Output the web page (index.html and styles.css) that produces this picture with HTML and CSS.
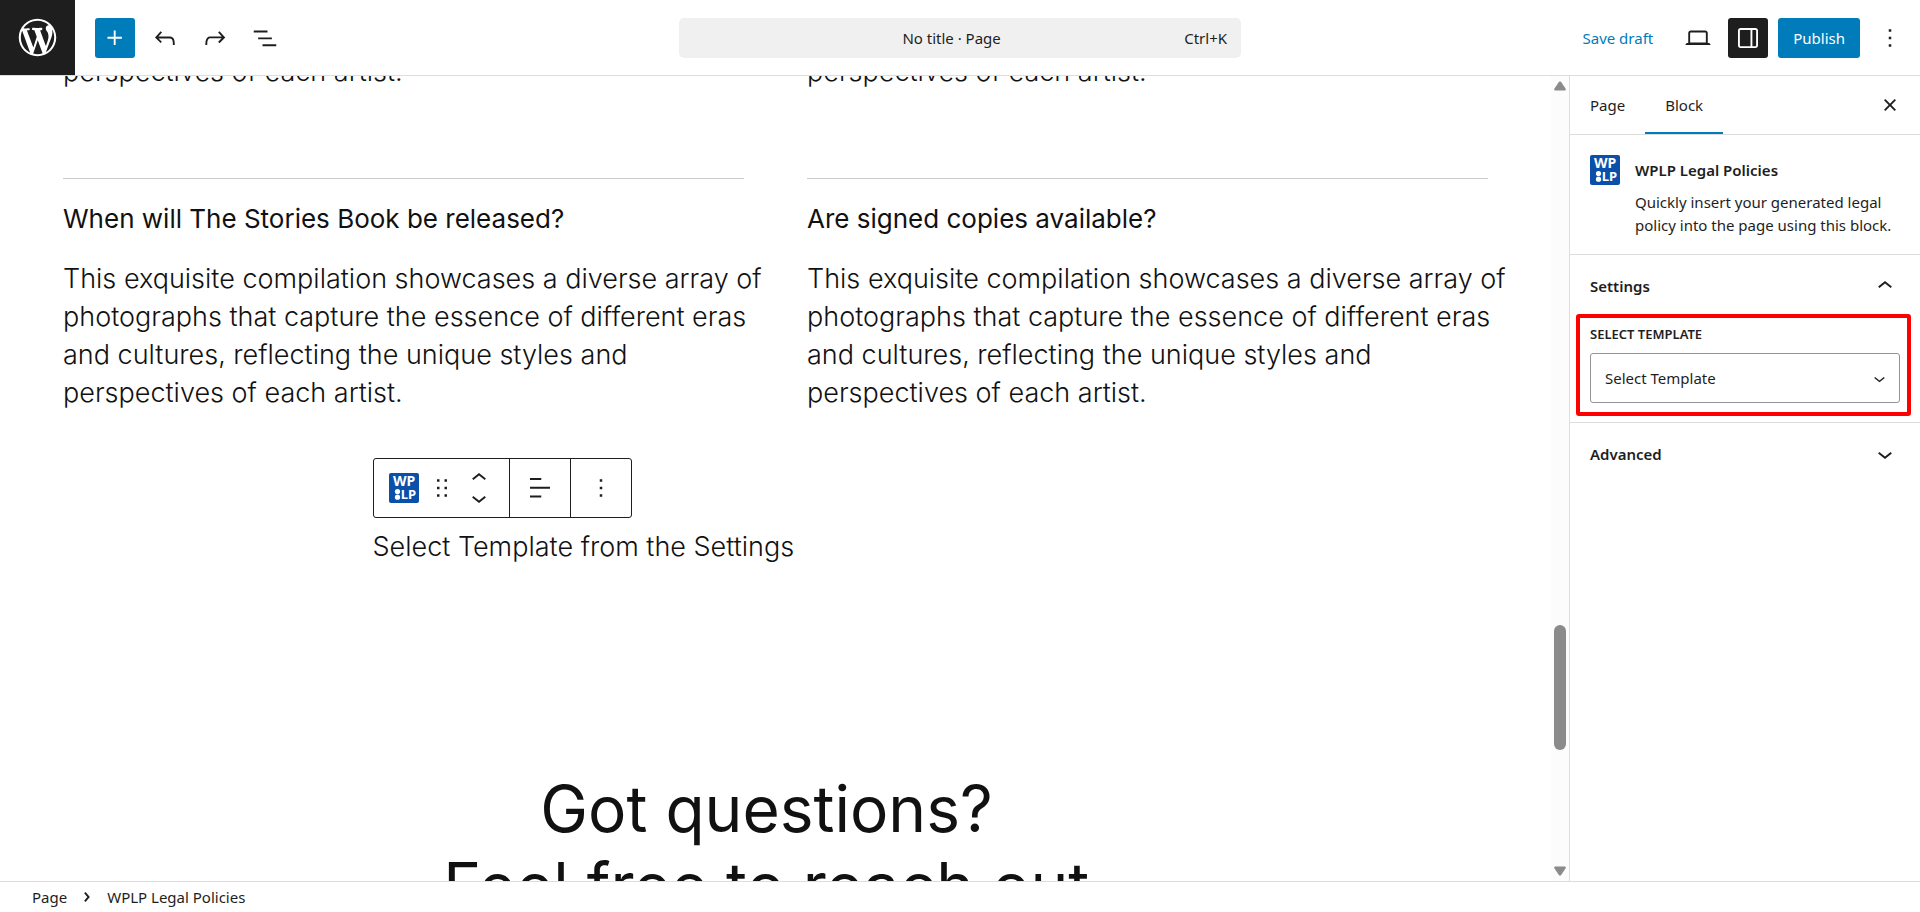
FILE: index.html
```html
<!DOCTYPE html>
<html lang="en">
<head>
  <meta charset="UTF-8">
  <meta name="viewport" content="width=device-width, initial-scale=1.0">
  <title>No title - Page editor</title>
  <link rel="stylesheet" href="styles.css">
</head>
<body>
  <!-- Shared WPLP logo -->
  <svg class="symbols" aria-hidden="true">
    <symbol id="wplp" viewBox="0 0 30 30">
      <rect width="30" height="30" rx="2" fill="#0b50a8"/>
      <g fill="#fff" font-family="'Noto Sans', sans-serif" font-weight="700" font-size="13">
        <text x="15" y="13" font-size="14" text-anchor="middle">WP</text>
        <text x="27" y="26" text-anchor="end">LP</text>
      </g>
      <circle cx="8.500" cy="18.500" r="2.600" fill="#fff"/>
      <circle cx="8.500" cy="24.200" r="2.600" fill="#fff"/>
    </symbol>
  </svg>

  <div class="editor">
    <header class="header">
      <div class="header-left">
        <a href="#" class="wp-logo" aria-label="View pages">
          <svg viewBox="-2 -2 24 24"><path d="M20 10c0-5.51-4.49-10-10-10C4.48 0 0 4.49 0 10c0 5.52 4.48 10 10 10 5.51 0 10-4.48 10-10zM7.78 15.37L4.37 6.22c.55-.02 1.17-.08 1.17-.08.5-.06.44-1.13-.06-1.11 0 0-1.45.11-2.37.11-.18 0-.37 0-.58-.01C4.12 2.69 6.87 1.11 10 1.11c2.33 0 4.45.87 6.05 2.34-.68-.11-1.65.39-1.65 1.58 0 .74.45 1.36.9 2.1.35.61.55 1.36.55 2.46 0 1.49-1.4 5-1.4 5l-3.03-8.37c.54-.02.82-.17.82-.17.5-.05.44-1.25-.06-1.22 0 0-1.44.12-2.38.12-.87 0-2.33-.12-2.33-.12-.5-.03-.56 1.2-.06 1.22l.92.08 1.26 3.41zM17.41 10c.24-.64.74-1.87.43-4.25.7 1.29 1.05 2.71 1.05 4.25 0 3.29-1.73 6.24-4.4 7.78.97-2.59 1.94-5.2 2.92-7.78zM6.1 18.09C3.12 16.65 1.11 13.53 1.11 10c0-1.3.23-2.48.72-3.59C3.25 10.3 4.67 14.2 6.1 18.09zm4.03-6.63l2.58 6.98c-.86.29-1.76.45-2.71.45-.79 0-1.57-.11-2.29-.33.81-2.38 1.62-4.74 2.42-7.1z"/></svg>
        </a>
        <div class="tools">
          <button class="icon-btn primary" aria-label="Block inserter"><svg class="icon" viewBox="0 0 24 24"><path d="M11 12.5V17.5H12.5V12.5H17.5V11H12.5V6H11V11H6V12.5H11Z"/></svg></button>
          <button class="icon-btn" aria-label="Undo"><svg class="icon" viewBox="0 0 24 24"><path d="M18.3 11.7c-.6-.6-1.4-.9-2.3-.9H6.7l2.9-3.3-1.1-1-4.5 5L8.500 16l1-1-2.7-2.7H16c.5 0 .9.2 1.3.5 1 1 1 3.4 1 4.5v.3h1.5v-.2c0-1.5 0-4.3-1.5-5.7z"/></svg></button>
          <button class="icon-btn" aria-label="Redo"><svg class="icon" viewBox="0 0 24 24"><path d="M15.6 6.5l-1.1 1 2.9 3.3H8c-.9 0-1.7.3-2.3.9-1.4 1.5-1.4 4.2-1.4 5.6v.2h1.5v-.3c0-1.1 0-3.5 1-4.5.3-.3.7-.5 1.3-.5h9.2L14.5 15l1.1 1.1 4.6-4.6-4.6-5z"/></svg></button>
          <button class="icon-btn" aria-label="Document overview"><svg class="icon" viewBox="0 0 24 24"><path d="M3 6h11v1.5H3V6Zm3.5 5.5h11V13h-11v-1.500ZM21 17H10v1.5h11V17Z"/></svg></button>
        </div>
      </div>

      <button class="command-bar">
        <span class="command-title">No title · Page</span>
        <span>Ctrl+K</span>
      </button>

      <div class="header-right">
        <button class="save-draft">Save draft</button>
        <button class="icon-btn" aria-label="View"><svg class="icon" viewBox="0 0 24 24"><path d="M20.5 16h-.7V8c0-1.1-.9-2-2-2H6.2c-1.1 0-2 .9-2 2v8h-.7c-.8 0-1.5.7-1.5 1.5h20c0-.8-.7-1.5-1.5-1.5zM5.7 8c0-.3.2-.5.5-.5h11.6c.3 0 .5.2.5.5v7.6H5.7V8z"/></svg></button>
        <button class="icon-btn pressed" aria-label="Settings"><svg class="icon" viewBox="0 0 24 24"><path d="M18 4H6c-1.1 0-2 .9-2 2v12c0 1.1.9 2 2 2h12c1.1 0 2-.9 2-2V6c0-1.1-.9-2-2-2zm-4 14.5H6c-.3 0-.5-.2-.5-.5V6c0-.3.2-.5.5-.5h8v13zm4.5-.5c0 .3-.2.5-.5.5h-2.5v-13H18c.3 0 .5.2.5.5v12z"/></svg></button>
        <button class="publish">Publish</button>
        <button class="icon-btn" aria-label="Options"><svg class="icon" viewBox="0 0 24 24"><path d="M13 19h-2v-2h2v2zm0-6h-2v-2h2v2zm0-6h-2V5h2v2z"/></svg></button>
      </div>
    </header>

    <div class="body">
      <main class="canvas">
        <div class="faq">
          <p class="faq-tail">perspectives of each artist.</p>
          <p class="faq-tail">perspectives of each artist.</p>
          <section class="faq-item">
            <h3>When will The Stories Book be released?</h3>
            <p>This exquisite compilation showcases a diverse array of<br>photographs that capture the essence of different eras<br>and cultures, reflecting the unique styles and<br>perspectives of each artist.</p>
          </section>
          <section class="faq-item">
            <h3>Are signed copies available?</h3>
            <p>This exquisite compilation showcases a diverse array of<br>photographs that capture the essence of different eras<br>and cultures, reflecting the unique styles and<br>perspectives of each artist.</p>
          </section>
        </div>

        <div class="block">
          <div class="block-toolbar">
            <div class="toolbar-group">
              <button class="tool block-type" aria-label="WPLP Legal Policies"><svg class="icon"><use href="#wplp"/></svg></button>
              <button class="tool drag" aria-label="Drag"><svg class="icon" viewBox="0 0 24 24"><path d="M8 7h2V5H8v2zm0 6h2v-2H8v2zm0 6h2v-2H8v2zm6-14v2h2V5h-2zm0 8h2v-2h-2v2zm0 6h2v-2h-2v2z"/></svg></button>
              <div class="movers">
                <button class="tool" aria-label="Move up"><svg class="icon" viewBox="0 0 24 24"><path d="M6.5 12.4L12 8l5.5 4.4-.9 1.2L12 10l-4.5 3.6-1-1.2z"/></svg></button>
                <button class="tool" aria-label="Move down"><svg class="icon" viewBox="0 0 24 24"><path d="M17.5 11.6L12 16l-5.5-4.4.9-1.2L12 14l4.5-3.6 1 1.2z"/></svg></button>
              </div>
            </div>
            <div class="toolbar-group">
              <button class="tool wide" aria-label="Align"><svg class="icon" viewBox="0 0 24 24"><path d="M13 5.5H4V4h9v1.500Zm7 7H4V11h16v1.500Zm-7 7H4V18h9v1.500Z"/></svg></button>
            </div>
            <div class="toolbar-group">
              <button class="tool wide" aria-label="Options"><svg class="icon" viewBox="0 0 24 24"><path d="M13 19h-2v-2h2v2zm0-6h-2v-2h2v2zm0-6h-2V5h2v2z"/></svg></button>
            </div>
          </div>
          <p>Select Template from the Settings</p>
        </div>

        <h2 class="contact-title">Got questions? <br>Feel free to reach out.</h2>
      </main>

      <div class="scrollbar">
        <svg viewBox="0 0 12 10"><path d="M5 .8Q6 0 7 .8L11.800 8Q12 9.500 11 9.500H1Q0 9.500 .2 8Z"/></svg>
        <div class="track"><div class="thumb"></div></div>
        <svg viewBox="0 0 12 10"><path d="M5 9.200Q6 10 7 9.200L11.800 2Q12 .5 11 .5H1Q0 .5 .2 2Z"/></svg>
      </div>

      <aside class="sidebar">
        <div class="tabs">
          <button class="tab">Page</button>
          <button class="tab active">Block</button>
          <button class="icon-btn close" aria-label="Close Settings"><svg class="icon" viewBox="0 0 24 24"><path d="M12 13.06l3.712 3.713 1.061-1.060L13.061 12l3.712-3.712-1.060-1.060L12 10.938 8.288 7.227l-1.061 1.060L10.939 12l-3.712 3.712 1.060 1.061L12 13.061z"/></svg></button>
        </div>

        <div class="block-card">
          <svg class="icon"><use href="#wplp"/></svg>
          <div>
            <h2>WPLP Legal Policies</h2>
            <p>Quickly insert your generated legal policy into the page using this block.</p>
          </div>
        </div>

        <div class="panel">
          <button class="panel-title">Settings <svg class="icon" viewBox="0 0 24 24"><path d="M6.5 12.4L12 8l5.5 4.4-.9 1.2L12 10l-4.5 3.6-1-1.2z"/></svg></button>
          <div class="field">
            <label for="template">Select Template</label>
            <div class="select-wrap">
              <select id="template">
                <option>Select Template</option>
              </select>
              <svg viewBox="0 0 24 24"><path d="M17.5 11.6L12 16l-5.500-4.4.9-1.2L12 14l4.5-3.6 1 1.2z"/></svg>
            </div>
          </div>
        </div>

        <div class="panel">
          <button class="panel-title">Advanced <svg class="icon" viewBox="0 0 24 24"><path d="M17.5 11.6L12 16l-5.5-4.4.9-1.2L12 14l4.5-3.6 1 1.2z"/></svg></button>
        </div>
      </aside>
    </div>

    <footer class="breadcrumb">
      <a href="#">Page</a>
      <svg viewBox="0 0 24 24"><path d="M10.862 8.040L14.280 12.029L10.862 16.017L9.723 15.040L12.305 12.029L9.723 9.017Z"/></svg>
      <span>WPLP Legal Policies</span>
    </footer>
  </div>
</body>
</html>
```
FILE: styles.css
```css
* {
  box-sizing: border-box;
}
body {
  margin: 0;
  font-family: "Noto Sans", "Open Sans", sans-serif;
  font-size: 15px;
  color: #1e1e1e;
  background: #fff;
}
h2, h3, p {
  margin: 0;
}
button {
  font: inherit;
  color: inherit;
  background: none;
  border: 0;
  padding: 0;
  cursor: pointer;
}
a {
  color: inherit;
  text-decoration: none;
}
svg {
  display: block;
  fill: currentColor;
  flex-shrink: 0;
}
.symbols {
  position: absolute;
  width: 0;
  height: 0;
}
.icon {
  width: 30px;
  height: 30px;
}
.editor {
  display: flex;
  flex-direction: column;
  height: 100vh;
}

/* Top bar */
.header {
  display: grid;
  grid-template-columns: 1fr minmax(0, 562px) 1fr;
  align-items: center;
  border-bottom: 1px solid #ddd;
}
.header-left, .tools, .header-right {
  display: flex;
  align-items: center;
}
.wp-logo {
  background: #1e1e1e;
  color: #fff;
  padding: 15px;
}
.wp-logo svg {
  width: 45px;
  height: 45px;
}
.tools {
  gap: 10px;
  padding-left: 20px;
}
.icon-btn {
  display: flex;
  align-items: center;
  justify-content: center;
  width: 40px;
  height: 40px;
  border-radius: 3px;
}
.primary, .publish {
  background: #007cba;
  color: #fff;
}
.pressed {
  background: #1e1e1e;
  color: #fff;
}
.command-bar {
  display: flex;
  align-items: center;
  height: 40px;
  padding: 0 14px 0 40px;
  background: #f0f0f0;
  border-radius: 5px;
}
.command-title {
  flex: 1;
}
.header-right {
  justify-content: flex-end;
  gap: 10px;
  padding-right: 10px;
}
.save-draft {
  height: 40px;
  padding: 0 15px;
  color: #007cba;
}
.publish {
  height: 40px;
  padding: 0 15px;
  border-radius: 3px;
}

/* Canvas */
.body {
  display: flex;
  flex: 1;
  min-height: 0;
}
.canvas {
  flex: 1;
  min-width: 0;
  overflow: hidden;
  padding: 0 63px;
  font-family: Inter, "Open Sans", sans-serif;
  font-size: 27px;
  font-weight: 300;
  line-height: 38px;
  color: #111;
}
.faq {
  display: grid;
  grid-template-columns: 1fr 1fr;
  column-gap: 63px;
  margin-top: -23px;
  white-space: nowrap;
}
.faq > * {
  min-width: 0;
}
.faq-tail {
  margin-bottom: 87px;
}
.faq-item {
  border-top: 1px solid #ccc;
  padding-top: 23px;
}
.faq-item h3 {
  font-size: 26px;
  font-weight: 400;
  line-height: 34px;
  margin-bottom: 24px;
}
.block {
  max-width: 806px;
  margin: 46px auto 0;
}
.block-toolbar {
  display: inline-flex;
  height: 60px;
  margin-bottom: 10px;
  border: 1px solid #1e1e1e;
  border-radius: 3px;
  background: #fff;
  color: #1e1e1e;
  vertical-align: top;
}
.toolbar-group {
  display: flex;
  align-items: center;
}
.toolbar-group + .toolbar-group {
  border-left: 1px solid #1e1e1e;
}
.tool {
  display: flex;
  align-items: center;
  justify-content: center;
}
.block-type {
  padding: 0 8px 0 15px;
}
.movers {
  padding: 0 15px 0 7px;
}
.movers .tool {
  height: 20px;
}
.wide {
  width: 60px;
}
.contact-title {
  margin-top: 204px;
  font-size: 64px;
  font-weight: 400;
  line-height: 77px;
  text-align: center;
  white-space: pre-wrap;
}

.scrollbar {
  display: flex;
  flex-direction: column;
  align-items: center;
  width: 18px;
  padding: 5px 0;
  background: #fcfcfc;
  color: #8a8a8a;
}
.scrollbar svg {
  width: 12px;
  height: 10px;
}
.track {
  flex: 1;
  display: grid;
  grid-template-rows: 534fr 125fr 116fr;
}
.thumb {
  grid-row: 2;
  width: 12px;
  border-radius: 6px;
  background: #8a8a8a;
}

/* Settings sidebar */
.sidebar {
  width: 351px;
  border-left: 1px solid #ddd;
}
.tabs {
  display: flex;
  align-items: center;
  border-bottom: 1px solid #ddd;
  padding-right: 10px;
}
.tab {
  height: 58px;
  padding: 0 20px;
}
.tab.active {
  box-shadow: inset 0 -2px 0 #007cba;
}
.close {
  margin-left: auto;
}
.block-card {
  display: flex;
  gap: 15px;
  padding: 20px 20px 17px;
}
.block-card h2 {
  font-size: 15px;
  font-weight: 600;
  line-height: 30px;
  margin-bottom: 6px;
}
.block-card p {
  line-height: 23px;
}
.panel {
  border-top: 1px solid #ddd;
}
.panel-title {
  display: flex;
  align-items: center;
  justify-content: space-between;
  width: 100%;
  height: 62px;
  padding: 0 20px;
  font-weight: 600;
}
.field {
  position: relative;
  padding: 7px 20px 19px;
}
/* highlight frame round the template field */
.field::after {
  content: "";
  position: absolute;
  inset: -3px 9px 6px 6px;
  border: 4px solid #f00;
  border-radius: 3px;
  pointer-events: none;
}
.field label {
  display: block;
  margin-bottom: 9px;
  font-size: 13px;
  font-weight: 600;
  line-height: 20px;
  text-transform: uppercase;
}
.select-wrap {
  position: relative;
}
.select-wrap select {
  appearance: none;
  display: block;
  width: 100%;
  height: 50px;
  padding: 0 14px;
  border: 1px solid #949494;
  border-radius: 3px;
  background: #fff;
  color: inherit;
  font: inherit;
}
.select-wrap svg {
  position: absolute;
  right: 9px;
  top: 14px;
  width: 23px;
  height: 23px;
  pointer-events: none;
}

/* Bottom bar */
.breadcrumb {
  display: flex;
  align-items: center;
  height: 31px;
  padding-left: 32px;
  border-top: 1px solid #ddd;
}
.breadcrumb svg {
  width: 30px;
  height: 30px;
  margin: 0 5px;
}
```
